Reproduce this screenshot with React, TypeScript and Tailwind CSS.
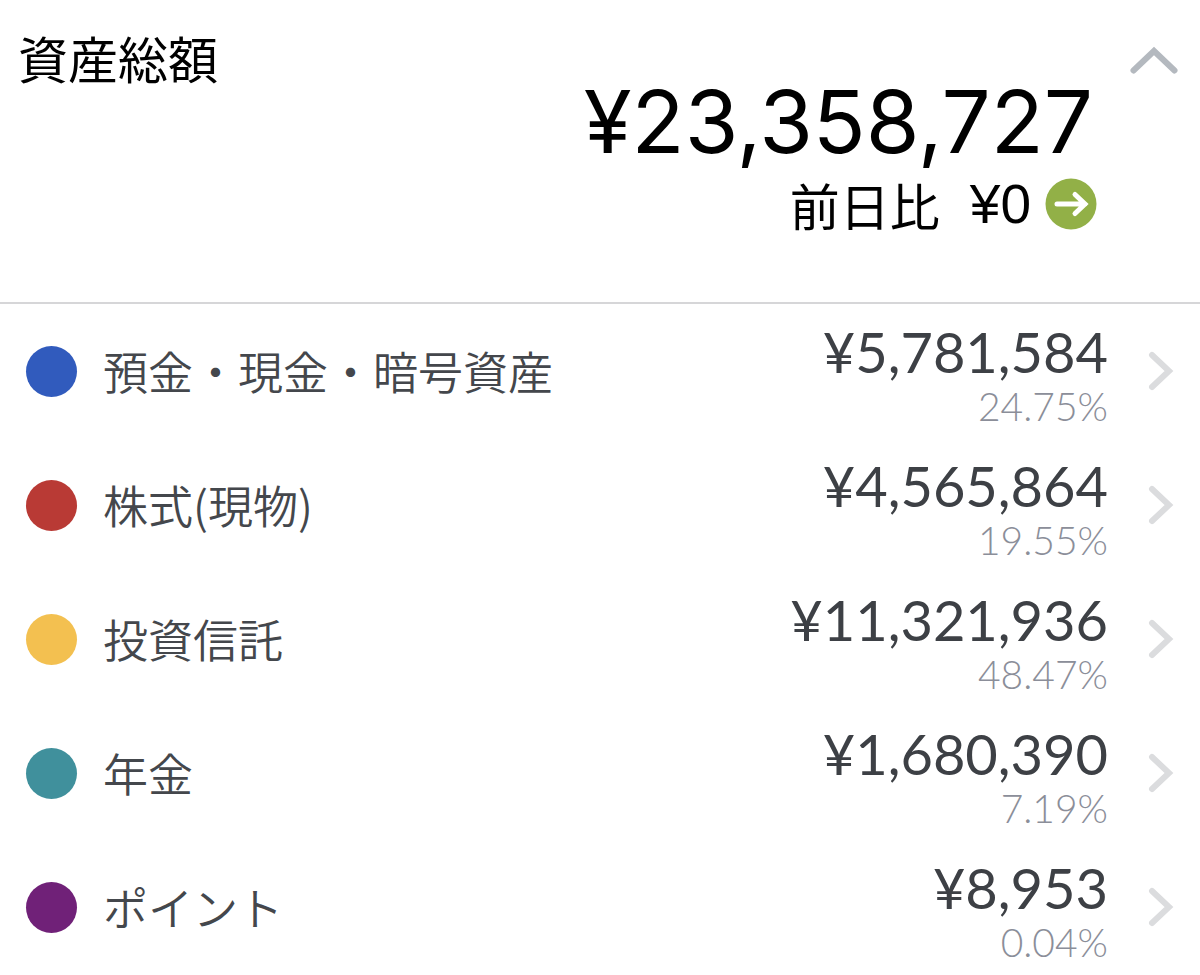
import { useState } from "react";

type Asset = {
  name: string;
  amount: string;
  ratio: string;
  dot: string;
};

const assets: Asset[] = [
  { name: "預金・現金・暗号資産", amount: "¥5,781,584", ratio: "24.75%", dot: "bg-[#315bbd]" },
  { name: "株式(現物)", amount: "¥4,565,864", ratio: "19.55%", dot: "bg-[#b93a35]" },
  { name: "投資信託", amount: "¥11,321,936", ratio: "48.47%", dot: "bg-[#f3c050]" },
  { name: "年金", amount: "¥1,680,390", ratio: "7.19%", dot: "bg-[#40909c]" },
  { name: "ポイント", amount: "¥8,953", ratio: "0.04%", dot: "bg-[#702178]" },
];

const ChevronUp = ({ open }: { open: boolean }) => (
  <svg viewBox="0 0 48 28" className={open ? "h-7 w-12" : "h-7 w-12 rotate-180"} fill="none" aria-hidden="true">
    <path d="M3.500 24.500 24 5l20.500 19.500" stroke="#b4b9bf" strokeWidth="6" strokeLinecap="round" strokeLinejoin="miter" />
  </svg>
);

const ChevronRight = () => (
  <svg viewBox="0 0 28 40" className="h-10 w-7 shrink-0" fill="none" aria-hidden="true">
    <path d="M4 4 21 20 4 36" stroke="#dbdcde" strokeWidth="6" strokeLinecap="round" strokeLinejoin="miter" />
  </svg>
);

const FlatBadge = () => (
  <svg viewBox="0 0 52 52" className="size-13 shrink-0" fill="none" aria-hidden="true">
    <circle cx="26" cy="26" r="25.500" fill="#92b047" />
    <path d="M12 26h28M30 16.500 40 26l-10 9.500" stroke="#fff" strokeWidth="5" strokeLinecap="round" strokeLinejoin="miter" />
  </svg>
);

const AssetRow = ({ asset }: { asset: Asset }) => (
  <li>
    <button type="button" className="flex h-[134px] w-full items-center pr-6 pl-[26px] text-left">
      <span className={`size-[51px] shrink-0 rounded-full ${asset.dot}`} />
      <span className="ml-[26px] flex-1 font-['Noto_Sans_CJK_JP',sans-serif] text-[45px] leading-[64px] font-[350] text-[#44474c]">
        {asset.name}
      </span>
      <span className="mr-10 flex flex-col items-end pt-1.5 font-['Lato',sans-serif]">
        <span className="text-[56px] leading-[64px] text-[#3d4045]">{asset.amount}</span>
        <span className="text-[39px] leading-[44px] font-light text-[#8b8e99]">{asset.ratio}</span>
      </span>
      <ChevronRight />
    </button>
  </li>
);

const App = () => {
  const [open, setOpen] = useState(true);

  return (
    <main className="min-h-screen bg-white">
      <header className="flex h-[304px] items-start justify-between border-b-2 border-[#d6d6d8] pr-[22px] pl-[18px] text-black">
        <h1 className="mt-5 font-['Noto_Sans_CJK_JP',sans-serif] text-[50px] leading-[74px]">資産総額</h1>
        <div className="flex items-start">
          <div className="mt-[70px] flex flex-col items-end">
            <p className="pr-1 font-['Inter',sans-serif] text-[87px] leading-[104px]">¥23,358,727</p>
            <div className="flex items-center">
              <span className="font-['Noto_Sans_CJK_JP',sans-serif] text-[50px] leading-[60px]">前日比</span>
              <span className="mr-3.5 ml-[30px] font-['Liberation_Sans',sans-serif] text-[55px] leading-[60px]">¥0</span>
              <FlatBadge />
            </div>
          </div>
          <button
            type="button"
            className="mt-[46px] ml-[33px]"
            aria-label="資産の内訳"
            aria-expanded={open}
            onClick={() => setOpen(!open)}
          >
            <ChevronUp open={open} />
          </button>
        </div>
      </header>

      {open && (
        <ul>
          {assets.map((asset) => (
            <AssetRow key={asset.name} asset={asset} />
          ))}
        </ul>
      )}
    </main>
  );
};

export default App;
